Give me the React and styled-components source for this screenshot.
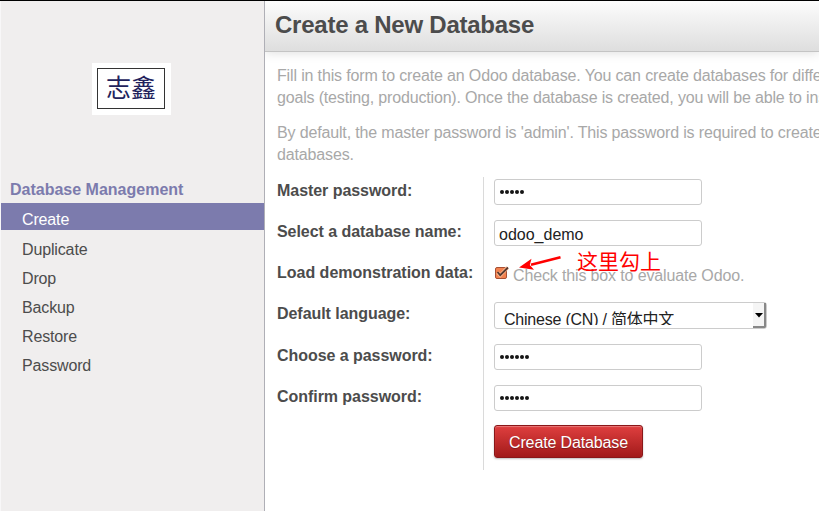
import React from "react";
import styled, { createGlobalStyle } from "styled-components";

const GlobalStyle = createGlobalStyle`
  * { box-sizing: border-box; }
  body {
    margin: 0;
    overflow: hidden;
    background: #fff;
    color: #4c4c4c;
    font-family: "Liberation Sans", "Noto Sans CJK SC", sans-serif;
    font-size: 16px;
  }
`;

const Page = styled.div`
  display: flex;
  width: 819px;
  height: 511px;
  border-top: 1px solid #000;
  overflow: hidden;
`;

const Sidebar = styled.aside`
  width: 265px;
  flex: none;
  border-left: 1px solid #f8f7f8;
  border-right: 1px solid #afafb6;
  background: #f0eeee;
`;

const Logo = styled.div`
  width: 79px;
  height: 52px;
  margin: 62px 0 0 91px;
  padding: 5px 6px 6px 5px;
  background: #fff;
`;

const LogoFrame = styled.div`
  height: 41px;
  border: 1px solid #333;
  text-align: center;
  font: 25px/35px "Noto Sans CJK SC", sans-serif;
  font-weight: 400;
  color: #22225c;
`;

const MenuTitle = styled.h2`
  margin: 64px 0 0;
  padding-left: 9px;
  height: 24px;
  font-size: 16px;
  line-height: 22px;
  color: #7c7bad;
`;

const Menu = styled.ul`
  margin: 0;
  padding: 0;
  list-style: none;
`;

const MenuItem = styled.li`
  height: ${(p) => (p.$active ? 27 : 29)}px;
  margin-bottom: ${(p) => (p.$active ? 5 : 0)}px;
  padding-left: 21px;
  line-height: ${(p) => (p.$active ? 33 : 30)}px;
  letter-spacing: -0.14px;
  color: ${(p) => (p.$active ? "#fff" : "#4c4c4c")};
  background: ${(p) => (p.$active ? "#7c7bad" : "transparent")};
`;

const Content = styled.main`
  flex: 1;
  min-width: 0;
  overflow: hidden;
`;

const Header = styled.header`
  height: 51px;
  padding-left: 10px;
  border-bottom: 1px solid #c4c4c4;
  background: linear-gradient(#fcfcfc, #dedede);
  box-shadow: 0 1px 10px rgba(0, 0, 0, 0.13);
`;

const Title = styled.h1`
  margin: 0;
  font-size: 24px;
  line-height: 48px;
  letter-spacing: -0.24px;
  white-space: nowrap;
`;

const Intro = styled.p`
  margin: 13px 0 0 12px;
  line-height: 22px;
  color: #a8a8a8;
  white-space: nowrap;
`;

const Line = styled.span`
  display: block;
  letter-spacing: ${(p) => p.$track || -0.15}px;
`;

const Form = styled.form`
  display: grid;
  grid-template-columns: 207px 1fr;
  margin: 11px 0 0 12px;
  height: 293px;
`;

const Labels = styled.div`
  padding-top: 3px;
  border-right: 1px solid #dadada;
`;

const Label = styled.label`
  display: block;
  height: ${(p) => p.$height || 41}px;
  line-height: 22px;
  font-weight: bold;
  letter-spacing: ${(p) => p.$track || -0.05}px;
  white-space: nowrap;
`;

const Fields = styled.div`
  padding: 2px 0 0 10px;
`;

const Field = styled.div`
  display: flex;
  align-items: flex-start;
  height: ${(p) => p.$height || 41}px;
`;

const Input = styled.input`
  width: 208px;
  height: 26px;
  padding: 3px 4px 0;
  border: 1px solid #ccc;
  border-radius: 3px;
  outline: 0;
  color: #222;
  background: #fff;
  font: 16px "Liberation Sans", sans-serif;
`;

const Dots = styled.div`
  display: flex;
  align-items: center;
  gap: 1px;
  width: 208px;
  height: 26px;
  padding: 0 4.5px;
  border: 1px solid #ccc;
  border-radius: 3px;
`;

const Dot = styled.i`
  width: 4px;
  height: 4px;
  border-radius: 50%;
  background: #151515;
`;

const Demo = styled.div`
  position: relative;
  display: flex;
  padding-left: 1px;
`;

const Check = styled.svg`
  flex: none;
  width: 14px;
  height: 13px;
  margin-top: 5px;
`;

const Hint = styled.span`
  margin-left: 4px;
  line-height: 30px;
  letter-spacing: -0.14px;
  color: #a8a8a8;
  white-space: nowrap;
`;

const Arrow = styled.svg`
  position: absolute;
  left: 25px;
  top: -7px;
  width: 46px;
  height: 18px;
`;

const Note = styled.span`
  position: absolute;
  left: 83px;
  top: -16px;
  color: #f00;
  font: 21px/30px "Noto Sans CJK SC", sans-serif;
  white-space: nowrap;
`;

const Select = styled.div`
  display: flex;
  justify-content: space-between;
  width: 273px;
  height: 27px;
  border: 1px solid #ccc;
  border-radius: 3px;
  color: #222;
`;

const Value = styled.span`
  height: 22px;
  padding-left: 9px;
  line-height: 33px;
  letter-spacing: -0.22px;
  overflow: hidden;
  white-space: nowrap;
`;

const Drop = styled.span`
  width: 13px;
  height: 25px;
  border-right: 2px solid #888;
  border-bottom: 2px solid #888;
  border-radius: 0 0 2px 0;
  background: #f5f5f5;
`;

const Caret = styled.svg`
  display: block;
  width: 8px;
  height: 5px;
  margin: 10px 0 0 2px;
`;

const Button = styled.button`
  width: 149px;
  height: 33px;
  margin-top: -1px;
  padding: 3px 0 0;
  border: 1px solid #8a1719;
  border-radius: 3px;
  background: linear-gradient(#df3f3f, #a21a1a);
  box-shadow: 0 1px 2px rgba(0, 0, 0, 0.25), inset 0 1px 1px rgba(255, 255, 255, 0.3);
  color: #fff;
  font: 16px "Liberation Sans", sans-serif;
  letter-spacing: -0.13px;
  text-shadow: 0 1px 1px rgba(0, 0, 0, 0.3);
  white-space: nowrap;
`;

const items = ["Create", "Duplicate", "Drop", "Backup", "Restore", "Password"];

function Password({ count }) {
  return (
    <Dots>
      {Array.from({ length: count }, (_, i) => <Dot key={i} />)}
    </Dots>
  );
}

export default function App() {
  return (
    <>
      <GlobalStyle />
      <Page>
        <Sidebar>
          <Logo><LogoFrame>志鑫</LogoFrame></Logo>
          <MenuTitle>Database Management</MenuTitle>
          <Menu>
            {items.map((name, i) => (
              <MenuItem key={name} $active={i === 0}>{name}</MenuItem>
            ))}
          </Menu>
        </Sidebar>
        <Content>
          <Header><Title>Create a New Database</Title></Header>
          <Intro>
            <Line>Fill in this form to create an Odoo database. You can create databases for different</Line>
            <Line $track={-0.17}>goals (testing, production). Once the database is created, you will be able to install</Line>
          </Intro>
          <Intro>
            <Line>By default, the master password is 'admin'. This password is required to create</Line>
            <Line>databases.</Line>
          </Intro>
          <Form>
            <Labels>
              <Label>Master password:</Label>
              <Label>Select a database name:</Label>
              <Label $track={-0.01}>Load demonstration data:</Label>
              <Label $height={42}>Default language:</Label>
              <Label>Choose a password:</Label>
              <Label>Confirm password:</Label>
            </Labels>
            <Fields>
              <Field><Password count={5} /></Field>
              <Field><Input type="text" defaultValue="odoo_demo" /></Field>
              <Field>
                <Demo>
                  <Check viewBox="0 0 14 13">
                    <rect x="0.5" y="1.5" width="11" height="11" rx="1.5" fill="#f3824f" stroke="#a65034" />
                    <path d="M2.5 6.5 5.2 9.5 12.5 1.5" fill="none" stroke="#f9b48d" strokeWidth="3.5" />
                    <path d="M2.5 6 5.2 9.2 13 1.5" fill="none" stroke="#573a30" strokeWidth="1.8" />
                  </Check>
                  <Hint>Check this box to evaluate Odoo.</Hint>
                  <Arrow viewBox="0 0 46 18">
                    <path d="M12 10.7 41.5 3.3" stroke="#f00" strokeWidth="2.6" />
                    <path d="M0 13.5 12.5 4.8 10.8 11 15 15.8Z" fill="#f00" />
                  </Arrow>
                  <Note>这里勾上</Note>
                </Demo>
              </Field>
              <Field $height={42}>
                <Select>
                  <Value>Chinese (CN) / 简体中文</Value>
                  <Drop><Caret viewBox="0 0 8 5"><path d="M0 0h8L4 4.5Z" fill="#000" /></Caret></Drop>
                </Select>
              </Field>
              <Field><Password count={6} /></Field>
              <Field><Password count={6} /></Field>
              <Field><Button type="button">Create Database</Button></Field>
            </Fields>
          </Form>
        </Content>
      </Page>
    </>
  );
}
